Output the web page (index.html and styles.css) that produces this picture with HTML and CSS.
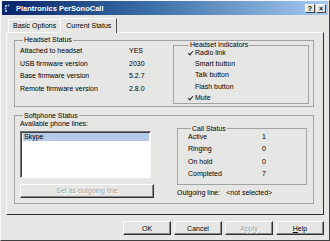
FILE: index.html
```html
<!DOCTYPE html>
<html lang="en">
<head>
  <meta charset="UTF-8">
  <title>Plantronics PerSonoCall</title>
  <link rel="stylesheet" href="styles.css">
</head>
<body>
  <div class="window">
    <div class="titlebar">
      <svg class="app-icon" width="9" height="9" viewBox="0 0 9 9">
        <circle cx="2" cy="2" r="1" fill="#dfe8f8"/>
        <circle cx="4.5" cy="1.5" r="1" fill="#9fb8e0"/>
        <circle cx="1.5" cy="4.5" r="1" fill="#9fb8e0"/>
        <circle cx="2" cy="7" r="1" fill="#dfe8f8"/>
      </svg>
      <span class="title">Plantronics PerSonoCall</span>
      <div class="caption-buttons">
        <span class="cbtn">?</span>
        <span class="cbtn">&#215;</span>
      </div>
    </div>

    <div class="content">
      <div class="tabs">
        <div class="tab">Basic Options</div>
        <div class="tab active">Current Status</div>
      </div>

      <div class="panel">
        <fieldset class="group headset">
          <legend>Headset Status</legend>
          <div class="status-table">
            <div class="row"><span class="label">Attached to headset</span><span>YES</span></div>
            <div class="row"><span class="label">USB firmware version</span><span>2030</span></div>
            <div class="row"><span class="label">Base firmware version</span><span>5.2.7</span></div>
            <div class="row"><span class="label">Remote firmware version</span><span>2.8.0</span></div>
          </div>
          <fieldset class="group indicators">
            <legend>Headset Indicators</legend>
            <ul class="checks">
              <li class="on">Radio link</li>
              <li>Smart button</li>
              <li>Talk button</li>
              <li>Flash button</li>
              <li class="on">Mute</li>
            </ul>
          </fieldset>
        </fieldset>

        <fieldset class="group softphone">
          <legend>Softphone Status</legend>
          <div class="lines">
            <div class="caption">Available phone lines:</div>
            <div class="listbox">
              <div class="item selected">Skype</div>
            </div>
            <button class="btn disabled">Set as outgoing line</button>
          </div>
          <div class="calls">
            <fieldset class="group call-status">
              <legend>Call Status</legend>
              <div class="call-row"><span class="label">Active</span><span>1</span></div>
              <div class="call-row"><span class="label">Ringing</span><span>0</span></div>
              <div class="call-row"><span class="label">On hold</span><span>0</span></div>
              <div class="call-row"><span class="label">Completed</span><span>7</span></div>
            </fieldset>
            <div class="outgoing"><span>Outgoing line:</span><span class="value">&lt;not selected&gt;</span></div>
          </div>
        </fieldset>
      </div>

      <div class="buttons">
        <button class="btn">OK</button>
        <button class="btn">Cancel</button>
        <button class="btn disabled">Apply</button>
        <button class="btn"><u>H</u>elp</button>
      </div>
    </div>
  </div>
</body>
</html>
```

FILE: styles.css
```css
* {
  box-sizing: border-box;
}
body {
  margin: 0;
  font-family: 'Liberation Sans', Arial, sans-serif;
  font-size: 7px;
  color: #000;
  background: #e6e6e4;
}
.window {
  width: 330px;
  height: 241px;
  background: #e6e6e4;
  border: 1px solid;
  border-color: #f6f6f6 #404040 #404040 #f6f6f6;
  display: flex;
  flex-direction: column;
}
.titlebar {
  height: 14px;
  margin: 0 1px;
  padding: 0 2px;
  background: linear-gradient(to right, #0a246a, #3a6ea5 45%, #a6caf0);
  color: #fff;
  display: flex;
  align-items: center;
}
.title {
  font-weight: bold;
  font-size: 7.5px;
  margin-left: 3px;
}
.caption-buttons {
  margin-left: auto;
  display: flex;
  gap: 1px;
}
.cbtn {
  width: 10px;
  height: 9px;
  background: #e6e6e4;
  border: 1px solid;
  border-color: #fff #404040 #404040 #fff;
  color: #000;
  font-weight: bold;
  font-size: 7px;
  line-height: 1;
  display: flex;
  align-items: center;
  justify-content: center;
}

.content {
  flex: 1;
  padding: 1px 5px 0 5px;
  display: flex;
  flex-direction: column;
}
.tabs {
  height: 16px;
  padding-left: 2px;
  display: flex;
  align-items: flex-end;
}
.tab {
  height: 13px;
  padding: 0 4px;
  border: 1px solid;
  border-bottom: none;
  border-color: #fff #505050 transparent #fff;
  line-height: 12px;
}
.tab.active {
  height: 15px;
  margin-bottom: -1px;
  margin-left: -1px;
  padding: 0 5px;
  background: #e6e6e4;
  line-height: 13px;
  position: relative;
  z-index: 1;
}
.panel {
  height: 183px;
  border: 1px solid;
  border-color: #fff #303030 #303030 #fff;
  padding: 3px 9px 0 7px;
}

.group {
  margin: 0;
  min-width: 0;
  border: 1px solid #a2a2a2;
  padding: 0 4px 2px 5px;
}
.group legend {
  padding: 0 1px;
  margin-left: 3px;
  line-height: 8px;
}
.headset {
  display: flex;
  align-items: flex-start;
}
.status-table {
  flex: 1;
  padding-top: 1px;
}
.row {
  height: 12.5px;
  line-height: 12.5px;
  display: flex;
}
.row .label {
  width: 109px;
}
.indicators {
  width: 136px;
  margin-top: -3px;
  padding: 0 4px 0 14px;
}
.indicators legend {
  margin-left: 1px;
}
.checks {
  list-style: none;
  margin: -2px 0 0;
  padding: 0;
}
.checks li {
  height: 11.2px;
  line-height: 11.2px;
  padding-left: 7px;
  position: relative;
}
.checks li.on::before {
  content: "";
  position: absolute;
  left: 0;
  top: 4px;
  width: 4px;
  height: 2px;
  border-left: 1px solid #222;
  border-bottom: 1px solid #222;
  transform: rotate(-50deg);
}

.softphone {
  margin-top: 5px;
  padding-bottom: 5px;
  display: flex;
  align-items: flex-start;
  gap: 23px;
}
.lines {
  width: 134px;
}
.caption {
  line-height: 8px;
}
.listbox {
  width: 131px;
  height: 47px;
  margin-top: 3px;
  background: #fff;
  border: 1px solid;
  border-color: #707070 #fff #fff #707070;
  box-shadow: inset 1px 1px 0 #404040;
  padding: 1px 1px 0 2px;
}
.item {
  height: 8px;
  line-height: 8px;
  padding-left: 1px;
}
.item.selected {
  background: #b5c9e8;
}
.btn {
  font-family: inherit;
  font-size: 7px;
  color: #000;
  background: #e6e6e4;
  border: 1px solid;
  border-color: #fff #303030 #303030 #fff;
  box-shadow: inset -1px -1px 0 #8a8a8a;
  padding: 0;
  height: 14px;
}
.btn.disabled {
  color: #a4a4a4;
  text-shadow: 1px 1px 0 #fff;
}
.lines .btn {
  width: 134px;
  margin-top: 6px;
}
.calls {
  width: 130px;
  margin-top: 5px;
}
.call-status {
  padding: 0 4px 3px 10px;
}
.call-row {
  height: 12.4px;
  line-height: 12.4px;
  display: flex;
}
.call-row:first-of-type {
  margin-top: -2px;
}
.call-row .label {
  width: 74px;
}
.outgoing {
  margin-top: 4px;
  line-height: 8px;
}
.outgoing .value {
  margin-left: 6px;
}

.buttons {
  margin-top: 6px;
  display: flex;
  justify-content: flex-end;
  gap: 3px;
}
.buttons .btn {
  width: 48px;
  height: 14px;
}
```
